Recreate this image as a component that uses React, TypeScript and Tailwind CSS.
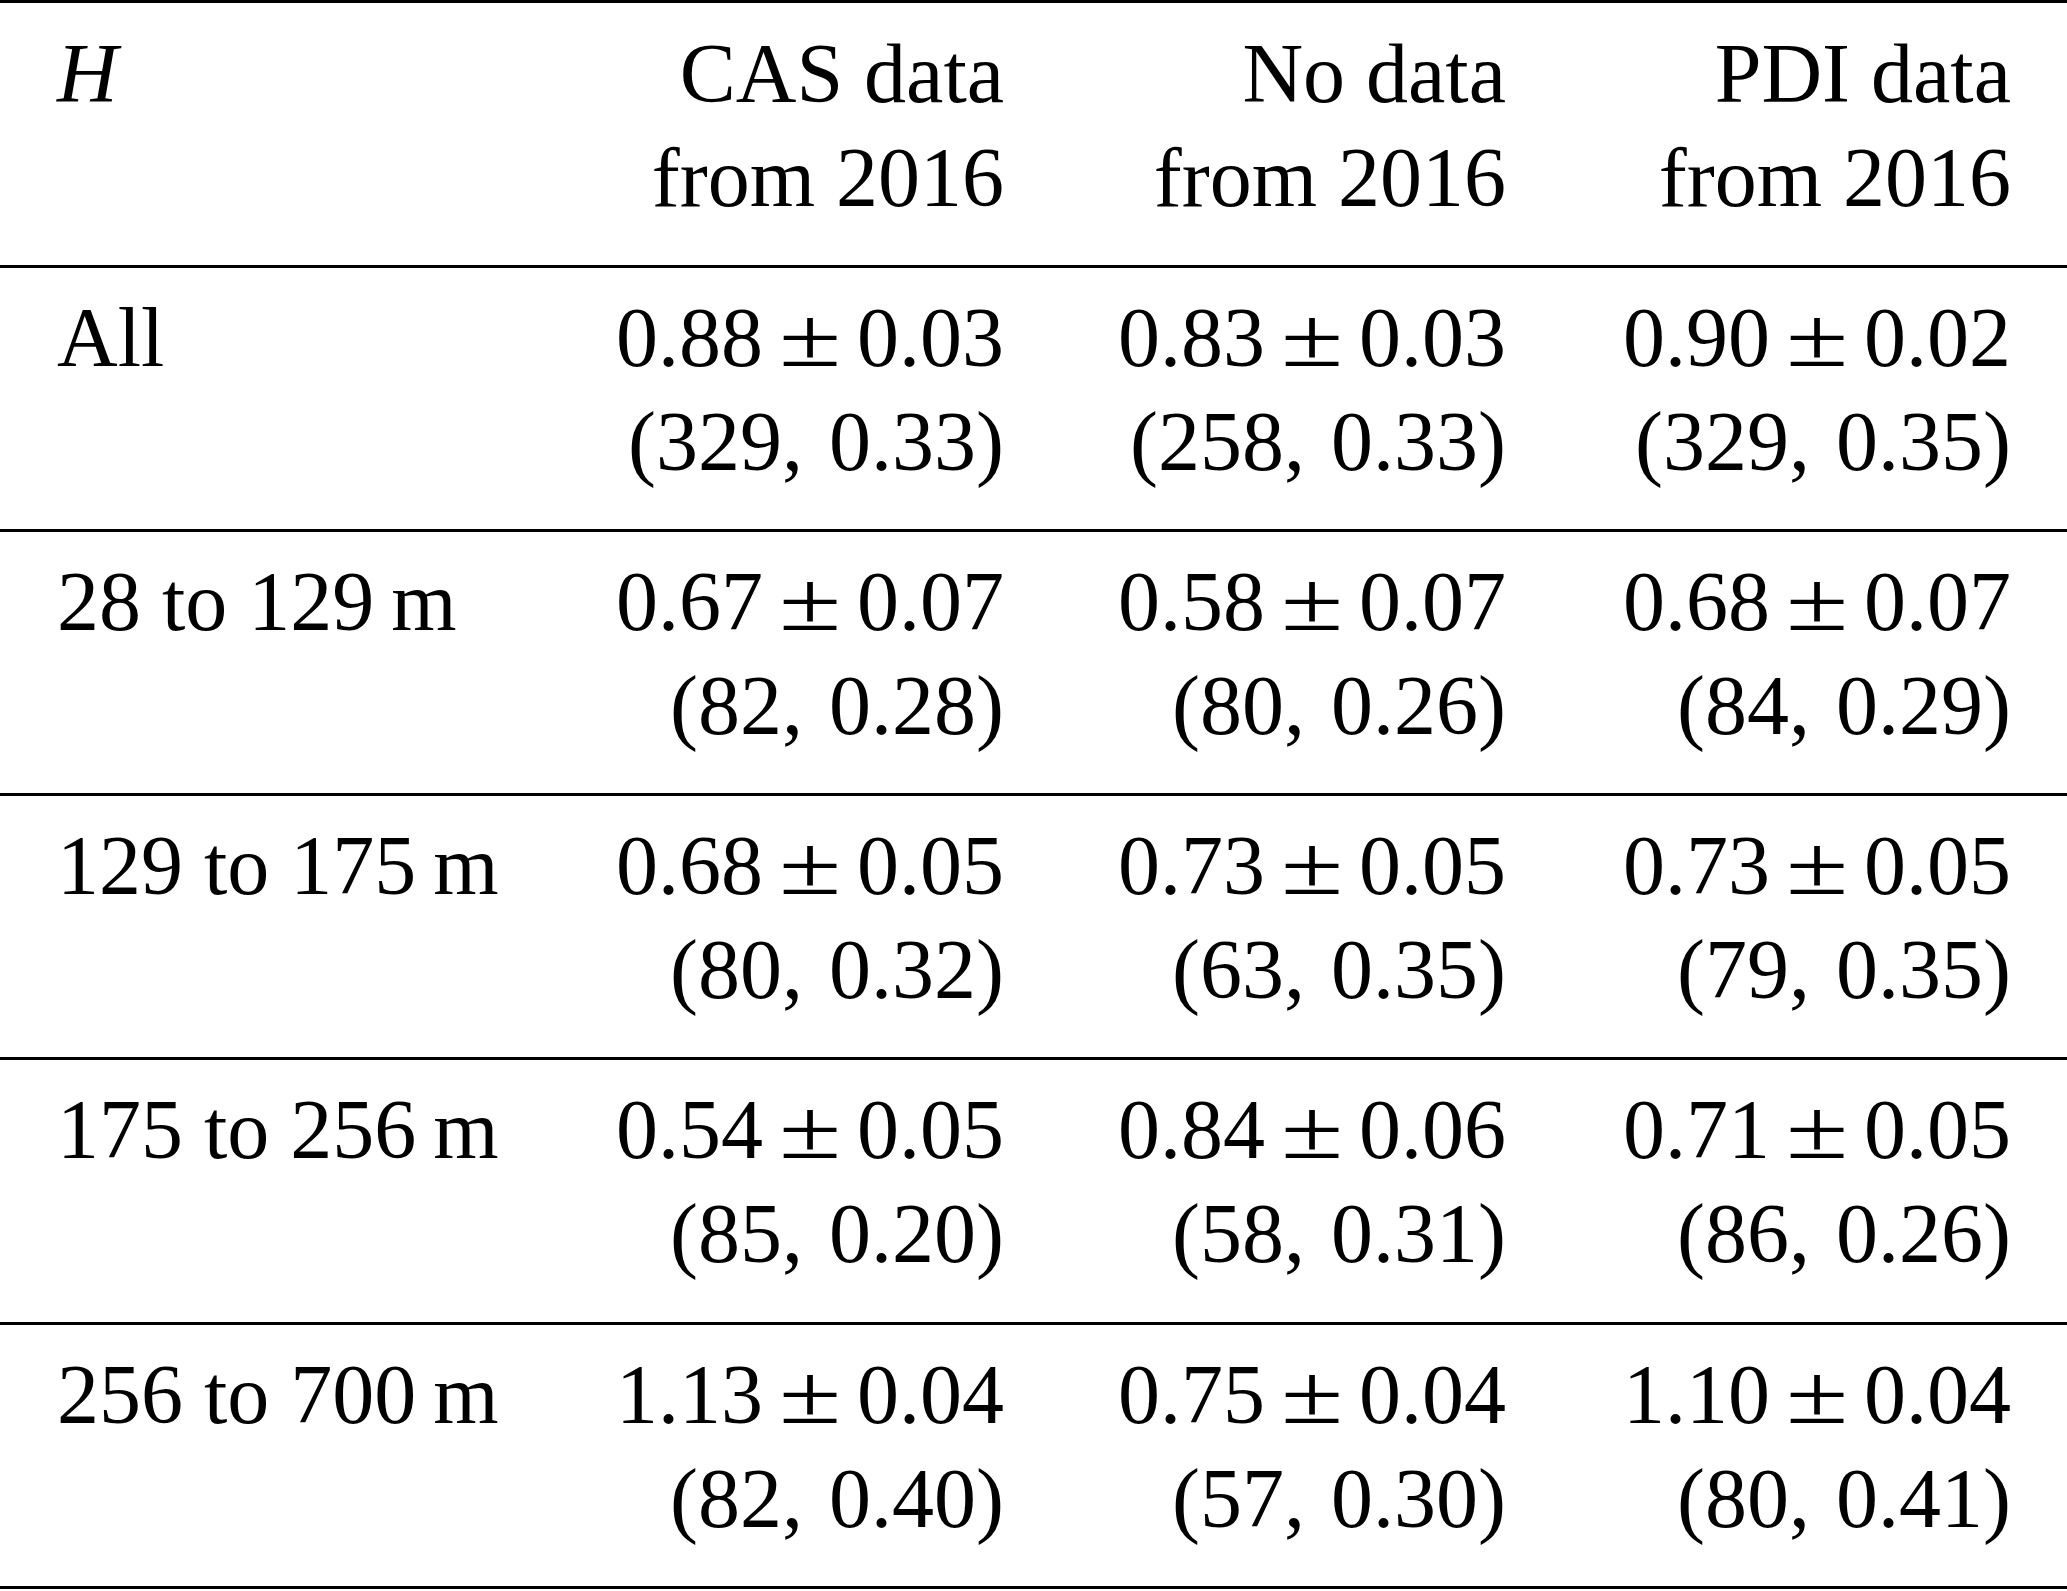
import React from "react";

function PM({ a, b }: { a: string; b: string }) {
  return (
    <span className="whitespace-nowrap">
      {a}
      <span className="inline-block mx-[24px] scale-x-[1.35]">±</span>
      {b}
    </span>
  );
}

type RowData = {
  label: React.ReactNode;
  cells: { a: string; b: string; n: string }[];
};

const rows: RowData[] = [
  {
    label: "All",
    cells: [
      { a: "0.88", b: "0.03", n: "(329, 0.33)" },
      { a: "0.83", b: "0.03", n: "(258, 0.33)" },
      { a: "0.90", b: "0.02", n: "(329, 0.35)" },
    ],
  },
  {
    label: "28 to 129\u2009m",
    cells: [
      { a: "0.67", b: "0.07", n: "(82, 0.28)" },
      { a: "0.58", b: "0.07", n: "(80, 0.26)" },
      { a: "0.68", b: "0.07", n: "(84, 0.29)" },
    ],
  },
  {
    label: "129 to 175\u2009m",
    cells: [
      { a: "0.68", b: "0.05", n: "(80, 0.32)" },
      { a: "0.73", b: "0.05", n: "(63, 0.35)" },
      { a: "0.73", b: "0.05", n: "(79, 0.35)" },
    ],
  },
  {
    label: "175 to 256\u2009m",
    cells: [
      { a: "0.54", b: "0.05", n: "(85, 0.20)" },
      { a: "0.84", b: "0.06", n: "(58, 0.31)" },
      { a: "0.71", b: "0.05", n: "(86, 0.26)" },
    ],
  },
  {
    label: "256 to 700\u2009m",
    cells: [
      { a: "1.13", b: "0.04", n: "(82, 0.40)" },
      { a: "0.75", b: "0.04", n: "(57, 0.30)" },
      { a: "1.10", b: "0.04", n: "(80, 0.41)" },
    ],
  },
];

const heights = ["h-[261px]", "h-[261px]", "h-[261px]", "h-[262px]", "h-[261px]"];

function Rule() {
  return <div className="h-[3px] bg-black" />;
}

export default function App() {
  return (
    <div className="w-[2067px] h-[1591px] bg-white text-black font-['Liberation_Serif','Times_New_Roman',serif] text-[84px] leading-[104px]">
      <Rule />
      <div className="h-[262px] pt-[19px] pl-[57px] grid grid-cols-[545px_402px_502px_505px]">
        <div className="italic">H</div>
        <div className="text-right">
          <div>CAS data</div>
          <div>from 2016</div>
        </div>
        <div className="text-right">
          <div>No data</div>
          <div>from 2016</div>
        </div>
        <div className="text-right">
          <div>PDI data</div>
          <div>from 2016</div>
        </div>
      </div>
      {rows.map((r, i) => (
        <React.Fragment key={i}>
          <Rule />
          <div
            className={`${heights[i]} pt-[18px] pl-[57px] grid grid-cols-[545px_402px_502px_505px]`}
          >
            <div className="whitespace-nowrap">{r.label}</div>
            {r.cells.map((c, j) => (
              <div key={j} className="text-right">
                <div>
                  <PM a={c.a} b={c.b} />
                </div>
                <div className="whitespace-nowrap [word-spacing:5px]">{c.n}</div>
              </div>
            ))}
          </div>
        </React.Fragment>
      ))}
      <Rule />
    </div>
  );
}
